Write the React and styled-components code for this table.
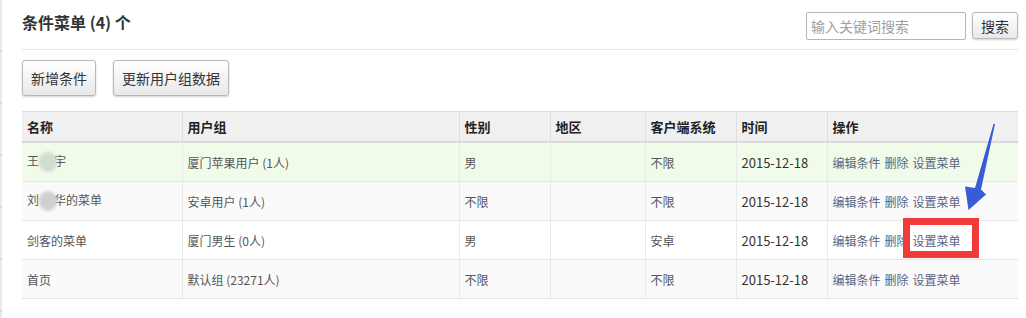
import React from "react";
import styled, { createGlobalStyle } from "styled-components";

const GlobalStyle = createGlobalStyle`
  html, body {
    margin: 0;
    padding: 0;
    background: #fff;
  }
  body {
    font-family: "Noto Sans CJK SC", "Liberation Sans", sans-serif;
    color: #555;
  }
`;

const columns = [
  { title: "名称", width: 160 },
  { title: "用户组", width: 277 },
  { title: "性别", width: 91 },
  { title: "地区", width: 95 },
  { title: "客户端系统", width: 91 },
  { title: "时间", width: 91 },
  { title: "操作", width: 191 },
];

const rows = [
  { name: ["王", "宇"], group: "厦门苹果用户 (1人)", sex: "男", area: "", os: "不限", date: "2015-12-18", tone: "success" },
  { name: ["刘", "华的菜单"], group: "安卓用户 (1人)", sex: "不限", area: "", os: "不限", date: "2015-12-18", tone: "odd" },
  { name: ["剑客的菜单"], group: "厦门男生 (0人)", sex: "男", area: "", os: "安卓", date: "2015-12-18", tone: "even" },
  { name: ["首页"], group: "默认组 (23271人)", sex: "不限", area: "", os: "不限", date: "2015-12-18", tone: "odd" },
];

const rowBg = {
  success: "#f0fbe9",
  odd: "#fafafa",
  even: "#ffffff",
};

const Page = styled.div`
  position: relative;
  display: flex;
  min-height: 318px;
`;

const SideEdge = styled.div`
  width: 2px;
  flex: none;
  background: repeating-linear-gradient(
    to bottom,
    #e6eaef 0px,
    #e6eaef 50px,
    #d3d8de 50px,
    #d3d8de 52px
  );
`;

const Main = styled.div`
  flex: 1;
  padding: 0 8px 0 20px;
`;

const Header = styled.div`
  display: flex;
  justify-content: space-between;
  align-items: flex-start;
  padding: 12px 0 9px;
  border-bottom: 1px solid #e8e8e8;
`;

const Title = styled.h2`
  margin: 0;
  font-size: 16px;
  line-height: 20px;
  font-weight: bold;
  color: #333;
`;

const Search = styled.div`
  display: flex;
  gap: 6px;
`;

const SearchInput = styled.input`
  width: 160px;
  height: 28px;
  box-sizing: border-box;
  border: 1px solid #b5b5b5;
  border-radius: 2px;
  padding: 0 4px;
  font-family: inherit;
  font-size: 14px;
  color: #333;
  outline: none;
  &::placeholder {
    color: #a0a0a0;
  }
`;

const Button = styled.button`
  height: ${(p) => (p.$small ? "27px" : "36px")};
  padding: 0 8px;
  border: 1px solid #b8b8b8;
  border-radius: 3px;
  background: linear-gradient(to bottom, #ffffff, #e9e9e9);
  box-shadow: 0 1px 2px rgba(0, 0, 0, 0.18);
  font-family: inherit;
  font-size: 14px;
  color: #333;
  cursor: pointer;
`;

const Toolbar = styled.div`
  display: flex;
  gap: 17px;
  margin-top: 10px;
`;

const Table = styled.table`
  margin-top: 15px;
  width: 996px;
  border-collapse: collapse;
  table-layout: fixed;
  font-size: 12px;
`;

const Th = styled.th`
  height: 29px;
  padding: 0 5px;
  text-align: left;
  font-size: 13px;
  font-weight: bold;
  color: #222;
  background: #f0f0f0;
  border-top: 1px solid #dedede;
  border-bottom: 2px solid #dadada;
  border-left: 1px solid #dedede;
  &:first-child {
    border-left: none;
  }
`;

const Tr = styled.tr`
  background: ${(p) => rowBg[p.$tone]};
`;

const Td = styled.td`
  height: 38px;
  padding: 0 5px;
  color: ${(p) => (p.$dark ? "#333" : "#555")};
  font-size: ${(p) => (p.$date ? "13px" : "12px")};
  border-bottom: 1px solid #e6e6e6;
  border-left: 1px solid #eaeaea;
  white-space: nowrap;
  &:first-child {
    border-left: none;
  }
`;

const Blur = styled.span`
  display: inline-block;
  width: 18px;
  height: 20px;
  margin-right: -3px;
  vertical-align: middle;
  border-radius: 9px;
  background: ${(p) => (p.$green ? "#d3dcd0" : "#cfcfcf")};
  filter: blur(1.5px);
`;

const Actions = styled.span`
  display: inline-flex;
  gap: 4px;
`;

const ActionLink = styled.a`
  color: #5a6382;
  text-decoration: none;
  cursor: pointer;
`;

const Highlight = styled.div`
  position: absolute;
  left: 903px;
  top: 218px;
  width: 76px;
  height: 40px;
  box-sizing: border-box;
  border: 7px solid #f33a3a;
  pointer-events: none;
`;

const Arrow = styled.svg`
  position: absolute;
  left: 960px;
  top: 120px;
  pointer-events: none;
`;

const App = () => {
  return (
    <Page>
      <GlobalStyle />
      <SideEdge />
      <Main>
        <Header>
          <Title>条件菜单 (4) 个</Title>
          <Search>
            <SearchInput placeholder="输入关键词搜索" />
            <Button $small>搜索</Button>
          </Search>
        </Header>
        <Toolbar>
          <Button>新增条件</Button>
          <Button>更新用户组数据</Button>
        </Toolbar>
        <Table>
          <colgroup>
            {columns.map((c) => (
              <col key={c.title} style={{ width: c.width }} />
            ))}
          </colgroup>
          <thead>
            <tr>
              {columns.map((c) => (
                <Th key={c.title}>{c.title}</Th>
              ))}
            </tr>
          </thead>
          <tbody>
            {rows.map((r, i) => (
              <Tr key={i} $tone={r.tone}>
                <Td>
                  {r.name[0]}
                  {r.name.length > 1 && <Blur $green={r.tone === "success"} />}
                  {r.name[1]}
                </Td>
                <Td>{r.group}</Td>
                <Td>{r.sex}</Td>
                <Td>{r.area}</Td>
                <Td>{r.os}</Td>
                <Td $dark $date>{r.date}</Td>
                <Td>
                  <Actions>
                    <ActionLink>编辑条件</ActionLink>
                    <ActionLink>删除</ActionLink>
                    <ActionLink>设置菜单</ActionLink>
                  </Actions>
                </Td>
              </Tr>
            ))}
          </tbody>
        </Table>
      </Main>
      <Highlight />
      <Arrow width="40" height="95" viewBox="960 120 40 95">
        <polygon
          points="995,124 993.5,124 975,188 965,186.5 968.5,210 986,194.5 981,189.5"
          fill="#3a5bd8"
        />
      </Arrow>
    </Page>
  );
};

export default App;
